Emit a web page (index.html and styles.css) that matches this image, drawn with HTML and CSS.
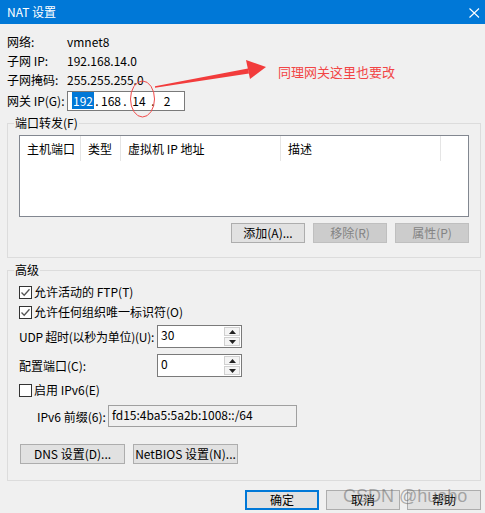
FILE: index.html
```html
<!DOCTYPE html>
<html lang="zh-CN">
<head>
<meta charset="utf-8">
<title>NAT 设置</title>
<link rel="stylesheet" href="styles.css">
</head>
<body>
<div class="dialog">
  <div class="titlebar">
    <span class="title">NAT 设置</span>
    <svg class="close" width="11" height="10" viewBox="0 0 11 10"><path d="M0.5 0.5 L10 9.5 M10 0.5 L0.5 9.5" stroke="#fff" stroke-width="1.1" fill="none"/></svg>
  </div>
  <div class="main">
    <div class="info">
      <div class="row"><span class="lbl">网络:</span><span>vmnet8</span></div>
      <div class="row"><span class="lbl">子网 IP:</span><span>192.168.14.0</span></div>
      <div class="row"><span class="lbl">子网掩码:</span><span>255.255.255.0</span></div>
      <div class="row gw"><span class="lbl">网关 IP(G):</span>
        <div class="ipbox">
          <span class="seg"><span class="sel">192</span></span><span class="dot">.</span>
          <span class="seg">168</span><span class="dot">.</span>
          <span class="seg">14</span><span class="dot">.</span>
          <span class="seg">2</span>
        </div>
      </div>
    </div>

    <fieldset class="group pf">
      <legend>端口转发(F)</legend>
      <div class="pf-inner">
        <div class="list">
          <div class="list-head">
            <div class="col c1">主机端口</div>
            <div class="col c2">类型</div>
            <div class="col c3">虚拟机 IP 地址</div>
            <div class="col c4">描述</div>
            <div class="col c5"></div>
          </div>
        </div>
        <div class="btnrow">
          <button class="btn">添加(A)...</button>
          <button class="btn disabled">移除(R)</button>
          <button class="btn disabled">属性(P)</button>
        </div>
      </div>
    </fieldset>

    <fieldset class="group adv">
      <legend>高级</legend>
      <div class="adv-inner">
        <div class="check-row"><span class="cb"><svg width="11" height="11" viewBox="0 0 11 11"><path d="M1.5 5.5 L4.2 8.3 L9.5 2.2" stroke="#555" stroke-width="1.3" fill="none"/></svg></span><span>允许活动的 FTP(T)</span></div>
        <div class="check-row"><span class="cb"><svg width="11" height="11" viewBox="0 0 11 11"><path d="M1.5 5.5 L4.2 8.3 L9.5 2.2" stroke="#555" stroke-width="1.3" fill="none"/></svg></span><span>允许任何组织唯一标识符(O)</span></div>
        <div class="field-row udp">
          <span class="flbl tight">UDP 超时(以秒为单位)(U):</span>
          <div class="spin"><span class="spin-val">30</span>
            <div class="spin-btns">
              <span class="sb"><svg width="7" height="4" viewBox="0 0 7 4"><path d="M0 4 L3.5 0 L7 4Z" fill="#222"/></svg></span>
              <span class="sb"><svg width="7" height="4" viewBox="0 0 7 4"><path d="M0 0 L3.5 4 L7 0Z" fill="#222"/></svg></span>
            </div>
          </div>
        </div>
        <div class="field-row port">
          <span class="flbl">配置端口(C):</span>
          <div class="spin"><span class="spin-val">0</span>
            <div class="spin-btns">
              <span class="sb"><svg width="7" height="4" viewBox="0 0 7 4"><path d="M0 4 L3.5 0 L7 4Z" fill="#222"/></svg></span>
              <span class="sb"><svg width="7" height="4" viewBox="0 0 7 4"><path d="M0 0 L3.5 4 L7 0Z" fill="#222"/></svg></span>
            </div>
          </div>
        </div>
        <div class="check-row ipv6"><span class="cb"></span><span>启用 IPv6(E)</span></div>
        <div class="prefix-row">
          <span class="plbl">IPv6 前缀(6):</span>
          <div class="prefix-box">fd15:4ba5:5a2b:1008::/64</div>
        </div>
        <div class="adv-btns">
          <button class="btn wide">DNS 设置(D)...</button>
          <button class="btn wide">NetBIOS 设置(N)...</button>
        </div>
      </div>
    </fieldset>

    <div class="footer">
      <button class="btn fbtn default">确定</button>
      <button class="btn fbtn">取消</button>
      <button class="btn fbtn">帮助</button>
    </div>
  </div>

  <svg class="annot" width="485" height="513" viewBox="0 0 485 513">
    <ellipse cx="142.5" cy="99" rx="12" ry="18" fill="none" stroke="#f04a4a" stroke-width="1"/>
    <polygon points="155,86.3 248,68.5 249,73.5 155,87.8" fill="#f23c3c"/>
    <polygon points="246,60 266,67 250,79" fill="#f23c3c"/>
  </svg>
  <div class="annot-text">同理网关这里也要改</div>
  <div class="watermark">CSDN @huabo</div>
</div>
</body>
</html>
```

FILE: styles.css
```css
* { box-sizing: border-box; }
html, body { margin: 0; padding: 0; }
body {
  width: 485px;
  height: 513px;
  overflow: hidden;
  background: #f0f0f0;
  font-family: "Noto Sans CJK SC", "Noto Sans", sans-serif;
  font-size: 12px;
  color: #000;
}
.dialog {
  position: relative;
  width: 485px;
  height: 513px;
  background: #f0f0f0;
}
.titlebar {
  height: 24px;
  background: #0078d7;
  color: #fff;
  display: flex;
  align-items: center;
  justify-content: space-between;
  padding: 0 5px 0 7px;
}
.title { font-size: 12px; line-height: 16px; }
.close { display: block; margin-top: 1px; }

.main { padding: 0 4px 0 7px; }

.info { padding-top: 8px; }
.row {
  display: flex;
  align-items: center;
  height: 19px;
  line-height: 16px;
}
.lbl { width: 60px; }
.row.gw { margin-top: 2px; height: 20px; }
.ipbox {
  width: 118px;
  height: 20px;
  border: 1px solid #7a7a7a;
  background: #fff;
  display: flex;
  align-items: center;
  padding-left: 4px;
}
.seg { width: 22px; text-align: center; }
.dot { width: 6px; text-align: center; }
.sel { background: #0078d7; color: #fff; padding: 0 1px; }

fieldset.group {
  margin: 0;
  padding: 0;
  border: 1px solid #dcdcdc;
  min-width: 0;
}
legend {
  margin-left: 6px;
  padding: 0 1px;
  line-height: 16px;
  font-size: 12px;
}
fieldset.pf { margin-top: 4px; }
.pf-inner { padding: 4px 11px 14px 11px; }
.list {
  height: 82px;
  border: 1px solid #828790;
  background: #fff;
}
.list-head {
  display: flex;
  height: 25px;
  line-height: 25px;
}
.col {
  padding-left: 7px;
  border-right: 1px solid #e5e5e5;
  white-space: nowrap;
}
.c1 { width: 61px; }
.c2 { width: 40px; }
.c3 { width: 160px; }
.c4 { width: 160px; }
.c5 { width: 0; border-right: none; }

.btnrow {
  margin-top: 6px;
  display: flex;
  justify-content: flex-end;
  gap: 8px;
}
.btn {
  font-family: inherit;
  font-size: 12px;
  color: #000;
  height: 20px;
  width: 74px;
  padding: 0;
  margin: 0;
  line-height: 16px;
  border: 1px solid #adadad;
  background: #e1e1e1;
  border-radius: 0;
}
.btn.disabled {
  background: #cccccc;
  border-color: #bfbfbf;
  color: #838383;
}

fieldset.adv { margin-top: 4px; }
.adv-inner { padding: 4px 11px 16px 11px; }
.check-row {
  display: flex;
  align-items: center;
  height: 20px;
  line-height: 16px;
}
.cb {
  width: 13px;
  height: 13px;
  border: 1px solid #333;
  background: #fff;
  margin-right: 2px;
  display: flex;
  align-items: center;
  justify-content: center;
}
.cb svg { display: block; }

.field-row {
  display: flex;
  align-items: center;
  height: 23px;
  line-height: 16px;
}
.udp { margin-top: 3px; }
.port { margin-top: 6px; }
.flbl { width: 138px; white-space: nowrap; }
.flbl.tight { letter-spacing: -0.25px; }
.spin {
  width: 85px;
  height: 23px;
  border: 1px solid #7a7a7a;
  background: #fff;
  display: flex;
  justify-content: space-between;
  padding: 1px 1px 1px 3px;
}
.spin-val { line-height: 16px; }
.spin-btns {
  width: 16px;
  display: flex;
  flex-direction: column;
  gap: 1px;
}
.sb {
  flex: 1;
  border: 1px solid #d0d0d0;
  background: #f4f4f4;
  display: flex;
  align-items: center;
  justify-content: center;
}
.sb svg { display: block; }

.ipv6 { margin-top: 3px; }
.prefix-row {
  margin-top: 5px;
  display: flex;
  align-items: center;
  height: 22px;
  padding-left: 18px;
}
.plbl { width: 71px; white-space: nowrap; }
.prefix-box {
  width: 189px;
  height: 22px;
  border: 1px solid #a0a0a0;
  background: #f0f0f0;
  padding: 1px 0 0 3px;
  line-height: 16px;
}
.adv-btns {
  margin-top: 17px;
  display: flex;
  gap: 8px;
  padding-left: 1px;
}
.btn.wide { width: 105px; }

.footer {
  margin-top: 9px;
  display: flex;
  justify-content: flex-end;
  gap: 7px;
}
.fbtn { width: 74px; }
.fbtn.default { border: 2px solid #0078d7; }

.annot {
  position: absolute;
  left: 0;
  top: 0;
  pointer-events: none;
}
.annot-text {
  position: absolute;
  left: 278px;
  top: 63px;
  font-size: 13px;
  line-height: 18px;
  color: #f24545;
}
.watermark {
  position: absolute;
  left: 343px;
  top: 486px;
  font-family: "Liberation Sans", Arial, sans-serif;
  font-size: 18px;
  line-height: 20px;
  color: rgba(110, 110, 110, 0.55);
  pointer-events: none;
  white-space: nowrap;
}
```
